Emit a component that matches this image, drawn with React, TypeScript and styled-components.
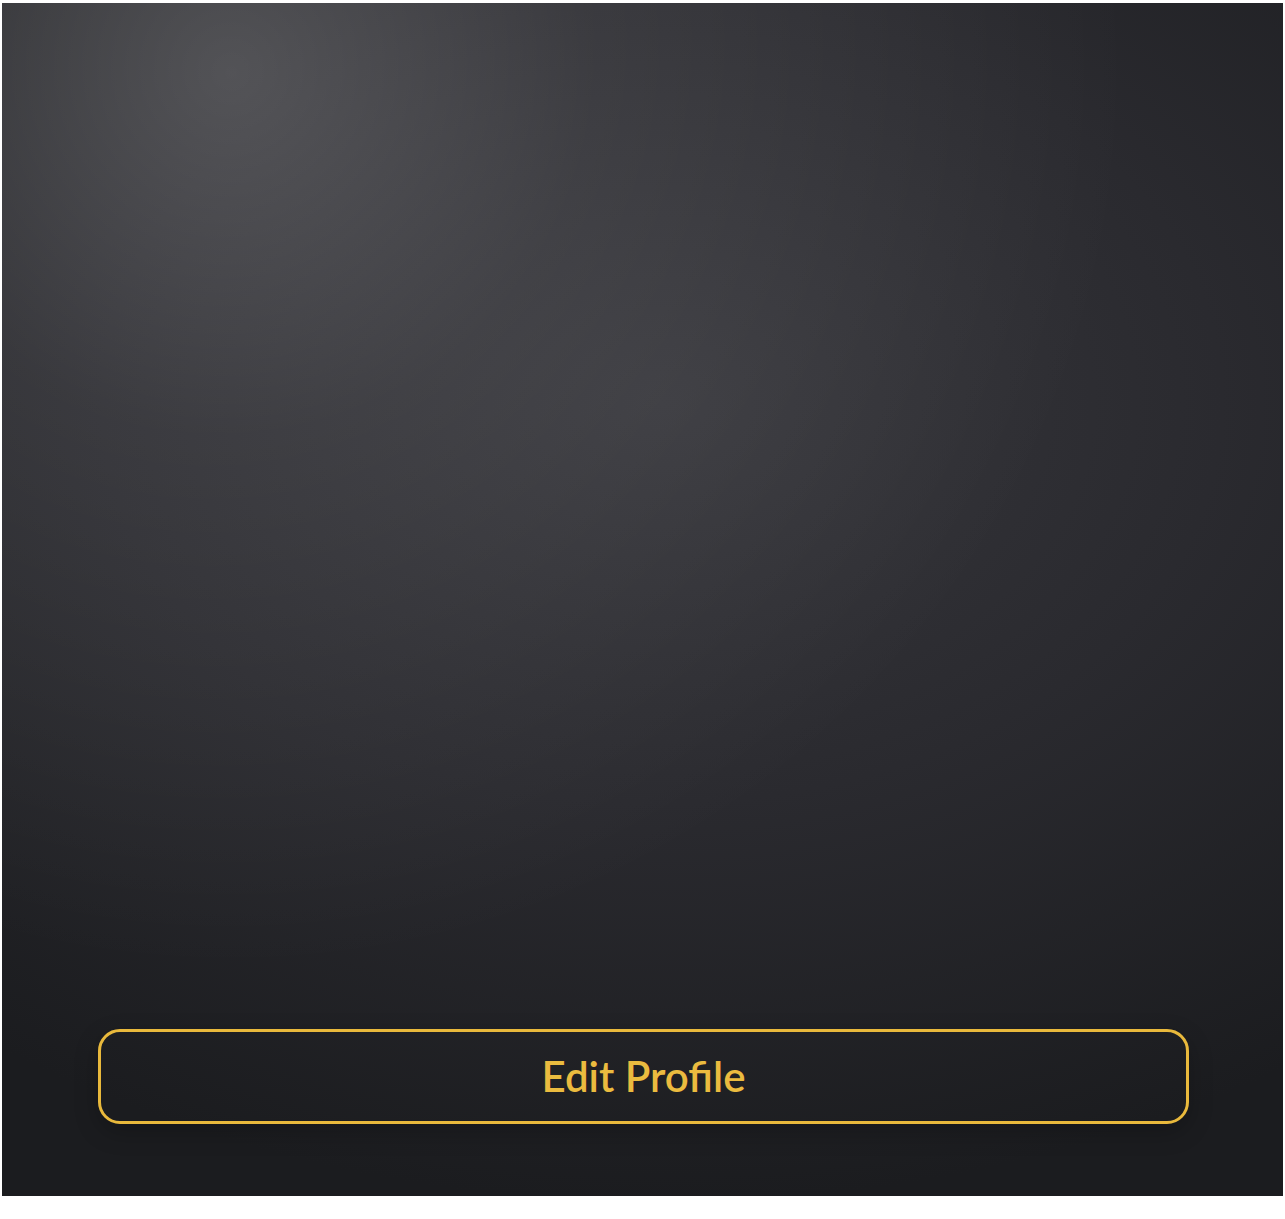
import React from "react";
import styled, { createGlobalStyle } from "styled-components";

const GlobalStyle = createGlobalStyle`
  html, body {
    margin: 0;
    padding: 0;
    background: #ffffff;
  }
  body {
    font-family: "Lato", "Open Sans", "Liberation Sans", sans-serif;
  }
  * { box-sizing: border-box; }
`;

const Page = styled.div`
  padding: 3px 2px 23px 2px;
`;

const Card = styled.section`
  position: relative;
  width: 1281px;
  height: 1193px;
  display: flex;
  flex-direction: column;
  justify-content: flex-end;
  align-items: center;
  padding: 0 94px 72px 96px;
  background:
    radial-gradient(circle 900px at 230px 70px, rgba(255, 255, 255, 0.2) 0%, rgba(255, 255, 255, 0.08) 40%, rgba(255, 255, 255, 0) 100%),
    radial-gradient(ellipse 1120px 800px at 660px 400px, #37373c 0%, #2a2a2f 50%, #1b1c1f 100%);
  background-color: #1b1c1f;
`;

const Button = styled.button`
  width: 100%;
  height: 95px;
  border: 3px solid #e9b93c;
  border-radius: 22px;
  background: transparent;
  color: #ebbb3f;
  font-family: "Lato", "Open Sans", "Liberation Sans", sans-serif;
  font-weight: 600;
  font-size: 42px;
  letter-spacing: 0;
  cursor: pointer;
  box-shadow: 0 8px 24px rgba(0, 0, 0, 0.22);
  display: flex;
  align-items: center;
  justify-content: center;
  padding: 0 0 2px;
`;

export default function App() {
  return (
    <>
      <GlobalStyle />
      <Page>
        <Card>
          <Button type="button">Edit Profile</Button>
        </Card>
      </Page>
    </>
  );
}
